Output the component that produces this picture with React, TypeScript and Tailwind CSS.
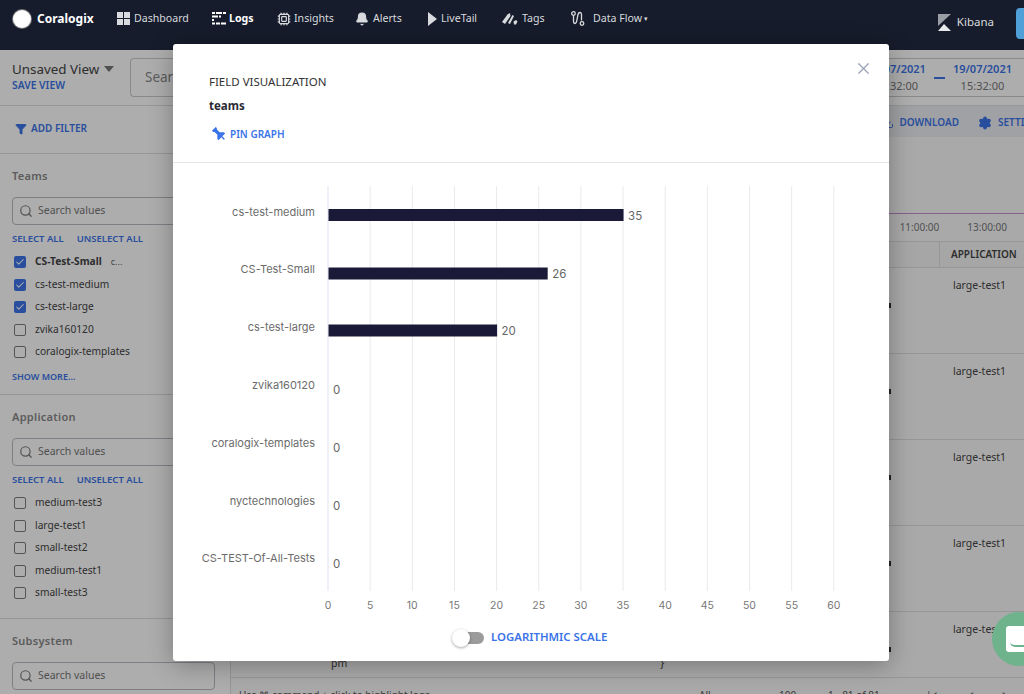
import React from "react";
import { Bell, Cpu, Search, Filter, Settings, Download, Check, X } from "lucide-react";

const font = "font-['Noto_Sans',sans-serif]";

const teams = [
  { label: "CS-Test-Small", checked: true, bold: true },
  { label: "cs-test-medium", checked: true },
  { label: "cs-test-large", checked: true },
  { label: "zvika160120", checked: false },
  { label: "coralogix-templates", checked: false },
];
const apps = ["medium-test3", "large-test1", "small-test2", "medium-test1", "small-test3"];

function GridIcon() {
  return (
    <svg width="13" height="13" viewBox="0 0 13 13" fill="currentColor" className="shrink-0">
      <rect x="0" y="0" width="6" height="6" />
      <rect x="7" y="0" width="6" height="6" />
      <rect x="0" y="7" width="6" height="6" />
      <rect x="7" y="7" width="6" height="6" />
    </svg>
  );
}
function LogsIcon() {
  return (
    <svg width="14" height="13" viewBox="0 0 14 13" fill="currentColor" className="shrink-0">
      <rect x="0" y="0" width="3" height="2" />
      <rect x="4" y="0" width="6" height="2" />
      <rect x="11" y="0" width="3" height="2" />
      <rect x="0" y="3.5" width="6" height="2" />
      <rect x="7" y="3.5" width="2" height="2" />
      <rect x="0" y="7" width="2" height="2" />
      <rect x="0" y="10.5" width="3" height="2" />
      <rect x="4" y="10.5" width="4" height="2" />
      <rect x="9" y="10.5" width="5" height="2" />
    </svg>
  );
}
function PlayIcon() {
  return (
    <svg width="9" height="14" viewBox="0 0 9 14" fill="currentColor" className="shrink-0">
      <path d="M0 0l9 7-9 7z" />
    </svg>
  );
}
function TagsIcon() {
  return (
    <svg width="16" height="13" viewBox="0 0 16 13" fill="currentColor" className="shrink-0">
      <path d="M0 10L5.5 2.5 8 1 8.5 4 3 12z" />
      <path d="M6 11l4.5-8L12 4l-4 8z" />
      <path d="M11.5 9.5L14 8l1.5 1.5L14 12.5h-2z" />
    </svg>
  );
}
function FlowIcon() {
  return (
    <svg width="14" height="15" viewBox="0 0 14 15" fill="none" stroke="currentColor" strokeWidth="1.3" className="shrink-0">
      <circle cx="2.5" cy="2.5" r="1.8" />
      <circle cx="11" cy="12.5" r="1.8" />
      <path d="M2.5 4.5v6q0 2 1.5 2t2-4l1-5q.5-2 2-2t1.5 2v6" />
    </svg>
  );
}
function PinIcon() {
  return (
    <svg width="16" height="16" viewBox="0 0 24 24" fill="currentColor" className="shrink-0 rotate-[-45deg]">
      <path d="M8 1h8v2.5l-1.5 1.5v6l4.5 4.5V18h-6v5l-1 1-1-1v-5H5v-2.5L9.5 11V5L8 3.5z" />
    </svg>
  );
}

const navItems = [
  { label: "Dashboard", icon: <GridIcon />, w: "w-[95px]", gap: "gap-[4px]" },
  { label: "Logs", icon: <LogsIcon />, w: "w-[65px]", gap: "gap-[3px]", bold: true },
  { label: "Insights", icon: <Cpu className="h-[14px] w-[14px] shrink-0" />, w: "w-[78px]", gap: "gap-[3px]" },
  { label: "Alerts", icon: <Bell className="h-[14px] w-[14px] shrink-0" fill="currentColor" />, w: "w-[73px]", gap: "gap-[4px]" },
  { label: "LiveTail", icon: <PlayIcon />, w: "w-[74px]", gap: "gap-[4px]" },
  { label: "Tags", icon: <TagsIcon />, w: "w-[69px]", gap: "gap-[4px]" },
  { label: "Data Flow", icon: <FlowIcon />, w: "w-[73px]", gap: "gap-[8px]" },
];

function Box({ checked }: { checked: boolean }) {
  return checked ? (
    <span className="flex h-3 w-3 items-center justify-center rounded-[2px] bg-[#3b74e8]">
      <Check className="h-2.5 w-2.5 text-white" strokeWidth={2.5} />
    </span>
  ) : (
    <span className="h-3 w-3 rounded-[2px] border border-[#7d7d7d]" />
  );
}

function SearchBox() {
  return (
    <div className="ml-3 mr-[15px] flex h-7 items-center gap-[5px] rounded border border-[#b9bcc4] px-[6px] text-[10.5px] text-[#777]">
      <Search className="h-3.5 w-3.5" />
      Search values
    </div>
  );
}

function Links() {
  return (
    <div className="mx-3 mt-[7px] flex gap-[13px] text-[9.5px] font-semibold text-[#3b74e8]">
      <span>SELECT ALL</span>
      <span>UNSELECT ALL</span>
    </div>
  );
}

function Row({ label, checked, bold }: { label: string; checked: boolean; bold?: boolean }) {
  return (
    <div className="flex h-[22.5px] items-center gap-[9px] pl-[14px] text-[10.2px] text-[#444]">
      <Box checked={checked} />
      <span className={bold ? "font-bold" : ""}>{label}</span>
      {bold && <span className="text-[9px] text-[#666]">c...</span>}
    </div>
  );
}

function Chart() {
  const ticks = Array.from({ length: 13 }, (_, i) => i * 5);
  const x = (v: number) => 328 + v * 8.43;
  const rows: [string, number, number, number][] = [
    ["cs-test-medium", 35, 215, 216],
    ["CS-Test-Small", 26, 273.5, 273],
    ["cs-test-large", 20, 330.5, 331],
    ["zvika160120", 0, 389, 389],
    ["coralogix-templates", 0, 447, 447],
    ["nyctechnologies", 0, 505, 505],
    ["CS-TEST-Of-All-Tests", 0, 563, 562],
  ];
  return (
    <svg width={716} height={440} viewBox="173 186 716 440" className="block font-['Inter',sans-serif]">
      {ticks.map((t) => (
        <g key={t}>
          <line x1={x(t)} x2={x(t)} y1={186} y2={591} stroke={t === 0 ? "#dfe3f3" : "#e9eaee"} strokeWidth={1} />
          <text x={x(t)} y={609} textAnchor="middle" fontSize={10.5} fill="#777">{t}</text>
        </g>
      ))}
      {rows.map(([name, v, y, ly]) => (
        <g key={name}>
          <text x={315} y={ly} textAnchor="end" fontSize={11} fill="#6b6b6b">{name}</text>
          {v > 0 && <rect x={328.5} y={y - 6} width={v * 8.43} height={12} fill="#1a1a38" />}
          <text x={x(v) + 5} y={y + 4.5} fontSize={11.5} fill="#666">{v}</text>
        </g>
      ))}
    </svg>
  );
}

function Tick() {
  return <span className="absolute left-[658px] top-[35px] h-[5px] w-[2px] bg-[#333]" />;
}

export default function App() {
  return (
    <div className={`relative h-[694px] w-[1024px] overflow-hidden bg-white ${font}`}>
      <header className="flex h-[50px] items-center bg-[#161c2b] pb-[12px] pl-[13px] text-[10.6px] text-[#d8dade]">
        <span className="h-[18px] w-[18px] rounded-full bg-white ring-1 ring-[#777]" />
        <span className="ml-[6px] w-[61px] text-[12px] font-bold text-white">Coralogix</span>
        <nav className="ml-[19px] flex">
          {navItems.map(({ label, icon, w, gap, bold }) => (
            <span key={label} className={`flex items-center ${gap} ${w} ${bold ? "font-bold text-white" : ""}`}>
              {icon}
              {label}
            </span>
          ))}
        </nav>
        <span className="text-[7px]">▾</span>
        <span className="ml-auto mt-[6px] flex items-center gap-[5px] text-[11.5px]">
          <svg width="14" height="17" viewBox="0 0 14 17"><path d="M0 0h13L0 12z" fill="#9a9da5" /><path d="M0 17l6-7 7 7z" fill="#e8e9ec" /></svg>
          Kibana
        </span>
        <span className="ml-[22px] mt-[8px] h-[31px] w-[8px] rounded-l-sm bg-[#4f9fd8]" />
      </header>

      <div className="flex h-[56px] items-start border-b border-[#ddd] pt-[8px]">
        <div className="w-[130px] shrink-0 pl-[12px] pt-[2px]">
          <div className="flex items-center gap-[5px] text-[13.4px] leading-[18px] text-[#444]">
            Unsaved View
            <span className="h-0 w-0 border-x-[5px] border-t-[6px] border-x-transparent border-t-[#777]" />
          </div>
          <div className="text-[10.3px] font-semibold leading-[15px] text-[#3b74e8]">SAVE VIEW</div>
        </div>
        <div className="flex h-[39px] flex-1 items-center rounded-l border-y border-l border-[#ccc] pl-[14px]">
          <span className="text-[13.5px] text-[#888]">Search</span>
          <div className="ml-auto flex items-center gap-[8px] pr-[12px] text-center text-[11px]">
            <div>
              <div className="font-semibold text-[#3b74e8]">18/07/2021</div>
              <div className="text-[#777]">15:32:00</div>
            </div>
            <span className="h-[2px] w-[11px] bg-[#3b74e8]" />
            <div>
              <div className="font-semibold text-[#3b74e8]">19/07/2021</div>
              <div className="text-[#777]">15:32:00</div>
            </div>
          </div>
        </div>
      </div>

      <div className="flex h-[588px]">
        <aside className="w-[230px] shrink-0 bg-white">
          <div className="flex h-[48px] items-center gap-[4px] border-b border-[#ddd] pb-[2px] pl-[15px] text-[10px] font-semibold text-[#3b74e8]">
            <Filter className="h-3 w-3" fill="currentColor" />
            ADD FILTER
          </div>
          <div className="h-[241px] border-b border-[#ddd] pt-[14px]">
            <div className="mb-[12px] ml-3 text-[11px] font-semibold tracking-wide text-[#888]">Teams</div>
            <SearchBox />
            <Links />
            <div className="mt-[5px]">
              {teams.map((t) => <Row key={t.label} {...t} />)}
            </div>
            <div className="ml-3 mt-[7px] text-[9px] font-semibold text-[#3b74e8]">SHOW MORE...</div>
          </div>
          <div className="h-[224px] border-b border-[#ddd] pt-[14px]">
            <div className="mb-[12px] ml-3 text-[11px] font-semibold tracking-wide text-[#888]">Application</div>
            <SearchBox />
            <Links />
            <div className="mt-[5px]">
              {apps.map((a) => <Row key={a} label={a} checked={false} />)}
            </div>
          </div>
          <div className="pt-[14px]">
            <div className="mb-[12px] ml-3 text-[11px] font-semibold tracking-wide text-[#888]">Subsystem</div>
            <SearchBox />
          </div>
        </aside>

        <main className="flex min-w-0 flex-1 flex-col border-l border-[#ddd] bg-[#fafafa]">
          <div className="flex h-[31px] shrink-0 items-center justify-end gap-[19px] whitespace-nowrap bg-[#ecedf2] pt-[2px] text-[10px] font-semibold text-[#3b74e8]">
            <span className="flex items-center gap-[5px]"><Download className="h-3 w-3" />DOWNLOAD</span>
            <span className="flex w-[46px] items-center gap-[6px]"><Settings className="h-3.5 w-3.5 shrink-0" fill="currentColor" />SETTINGS</span>
          </div>
          <div className="h-[77px] shrink-0 border-b border-[#c58bd0]" />
          <div className="flex h-[27px] shrink-0 items-center justify-end gap-[28px] pr-[17px] text-[10px] text-[#777]">
            <span>11:00:00</span>
            <span>13:00:00</span>
          </div>
          <div className="flex h-[27px] shrink-0 justify-end border-y border-[#ddd] bg-[#f5f5f5]">
            <span className="flex w-[85px] items-center border-l border-[#ddd] pl-[11px] text-[10px] font-semibold text-[#444]">APPLICATION</span>
          </div>
          <div className="min-h-0 flex-1 text-[10.5px] text-[#444]">
            {[0, 1, 2, 3].map((i) => (
              <div key={i} className="relative flex h-[86px] justify-end border-b border-[#ddd] pt-[10px]">
                <span className="w-[85px] pl-[14px]">large-test1</span>
                <Tick />
              </div>
            ))}
            <div className="relative flex h-[66px] flex-col border-b border-[#ddd] pt-[10px]">
              <span className="w-[85px] self-end pl-[14px]">large-test1</span>
              <Tick />
              <div className="mt-auto flex pb-[5px] pl-[100px]">
                <span>pm</span>
                <span className="ml-[313px]">{"}"}</span>
              </div>
            </div>
          </div>
          <div className="flex h-[15px] shrink-0 items-start whitespace-nowrap pl-[8px] pt-[9px] text-[10px] text-[#555]">
            <span className="w-[460px]">Use ⌘ command + click to highlight logs</span>
            <span className="w-[80px]">All</span>
            <span className="w-[49px]">100</span>
            <span className="w-[98px]">1 - 81 of 81</span>
            <span className="w-[42px]">|&lt;</span>
            <span className="w-[34px]">&lt;</span>
            <span>&gt;</span>
          </div>
        </main>
      </div>

      {/* modal backdrop */}
      <div className="absolute inset-x-0 bottom-0 top-[50px] bg-black/[0.32]" />

      {/* chat launcher */}
      <div className="absolute left-[992px] top-[612px] flex h-[54px] w-[54px] items-center rounded-full bg-[#6fb38d] pl-[14px]">
        <span className="relative h-[26px] w-[26px] rounded-[3px] bg-white">
          <span className="absolute bottom-[5px] left-[4px] h-[5px] w-[18px] rounded-b-full border-b-2 border-[#6fb38d]" />
        </span>
      </div>

      {/* modal */}
      <div className="absolute left-[173px] top-[44px] h-[617px] w-[716px] rounded-[3px] bg-white shadow-[0_4px_24px_rgba(0,0,0,0.3)]">
        <div className="relative h-[119px] border-b border-[#e4e4e6] pl-[36px] pt-[30px]">
          <div className="text-[11.5px] leading-[16px] text-[#333]">FIELD VISUALIZATION</div>
          <div className="mt-[8px] text-[11.5px] font-bold leading-[16px] text-[#2a2a33]">teams</div>
          <div className="ml-[2px] mt-[12px] flex items-center gap-[3px] text-[10px] font-semibold leading-[16px] text-[#3b74e8]">
            <PinIcon />
            PIN GRAPH
          </div>
          <X className="absolute right-[16px] top-[15px] h-[19px] w-[19px] text-[#9aa3b5]" strokeWidth={1.5} />
        </div>
        <div className="mt-[23px]"><Chart /></div>
        <div className="absolute left-[283px] top-[584px] flex items-center gap-[7px]">
          <span className="relative h-[12px] w-[28px] rounded-full bg-[#9b9b9b]">
            <span className="absolute left-[-4px] top-[-3px] h-[18px] w-[18px] rounded-full bg-white shadow-[0_1px_3px_rgba(0,0,0,0.35)]" />
          </span>
          <span className="mb-[2px] text-[11.4px] font-semibold text-[#3b74e8]">LOGARITHMIC SCALE</span>
        </div>
      </div>
    </div>
  );
}
